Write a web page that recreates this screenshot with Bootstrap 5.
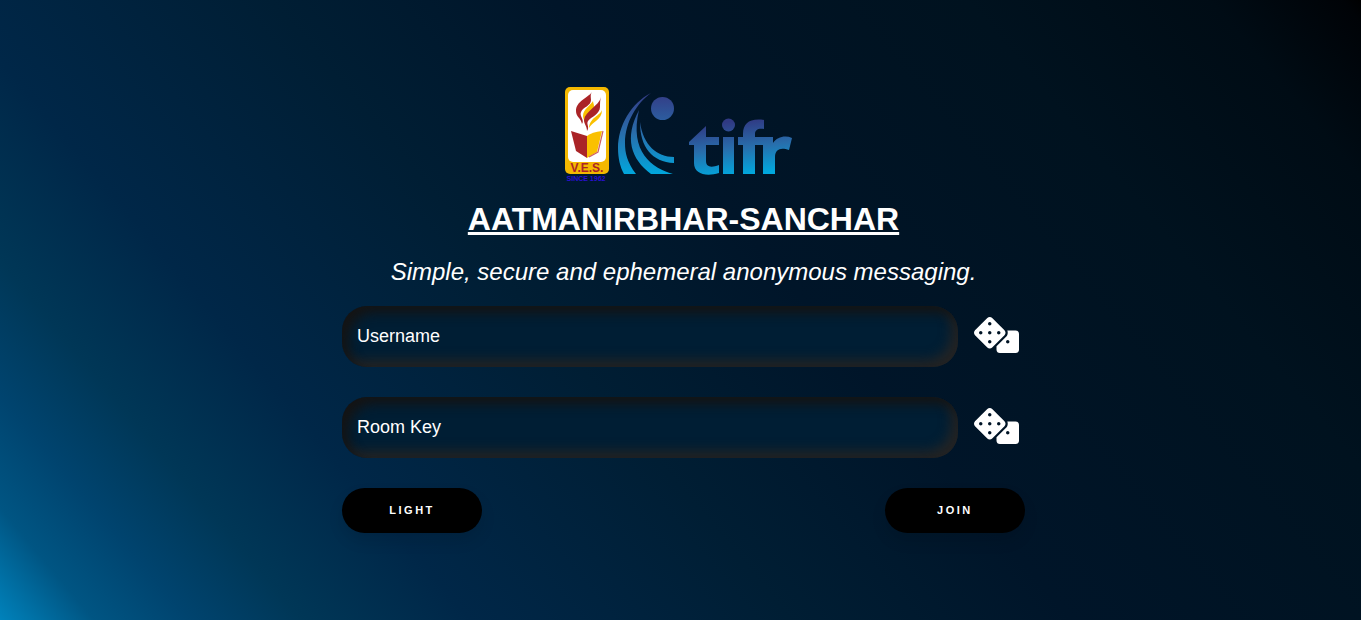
<!DOCTYPE html>
<html lang="en">
<head>
<meta charset="utf-8">
<meta name="viewport" content="width=device-width, initial-scale=1">
<title>Aatmanirbhar-Sanchar</title>
<link rel="stylesheet" href="https://cdn.jsdelivr.net/npm/bootstrap@5.3.0/dist/css/bootstrap.min.css">
<style>
body { font-family: "Liberation Sans", Arial, sans-serif; color: #fff; padding: 0 0 4px 6px; background: linear-gradient(50deg, #0082bb 0%, #005583 5%, #00446f 10%, #003757 16%, #002748 25%, #001e34 42%, #001529 57%, #00121f 79%, #000c15 92%, #000307 99%, #000001 100%); }
.join-panel { width: 50.4%; min-width: 320px; }
.logo-row { gap: 5px; padding-right: 11px; margin-bottom: 15px; }
.ves-logo { width: 46px; height: 100px; }
.tifr-logo { width: 178px; height: 100px; }
.site-title { font-size: 32px; line-height: 40px; font-weight: 700; margin-bottom: 19px; }
.tagline { font-size: 24px; line-height: 28px; font-style: italic; margin-bottom: 20px; }
.field-input { height: 61px; border: 0; border-radius: 25px; padding: 0 15px; font-size: 18px; color: #fff; background: #001e34; box-shadow: inset 7px 7px 12px #141414, inset -7px -7px 12px #242424; }
.field-input:focus { color: #fff; background: #001e34; box-shadow: inset 7px 7px 12px #141414, inset -7px -7px 12px #242424, 0 0 0 2px #0082bb; }
.field-input::placeholder { color: #fff; opacity: 1; }
.field-row { gap: 16px; padding-right: 6px; }
.dice-btn { width: 45px; height: 38px; border: 0; padding: 0; }
.pill-btn { width: 140px; height: 45px; border: 0; border-radius: 45px; background: #000; color: #fff; font-size: 11px; font-weight: 700; letter-spacing: 2.5px; box-shadow: 0 8px 15px rgba(0,0,0,.1); }
.pill-btn:hover { background: #0082bb; color: #fff; }
.field-gap { gap: 30px; }
</style>
</head>
<body class="min-vh-100 d-flex justify-content-center align-items-center">
<svg width="0" height="0" class="position-absolute" aria-hidden="true">
  <symbol id="dice" viewBox="0 0 640 512"><path fill="currentColor" d="M592 192H473.260c12.690 29.590 7.120 65.200-17 89.320L320 417.580V464c0 26.510 21.490 48 48 48h224c26.510 0 48-21.490 48-48V240c0-26.510-21.490-48-48-48zM480 376c-13.250 0-24-10.750-24-24 0-13.260 10.750-24 24-24s24 10.740 24 24c0 13.250-10.750 24-24 24zm-46.370-186.700L258.700 14.370c-19.160-19.160-50.230-19.160-69.390 0L14.370 189.300c-19.160 19.160-19.160 50.230 0 69.390L189.300 433.630c19.160 19.160 50.230 19.160 69.390 0L433.630 258.700c19.160-19.170 19.160-50.240 0-69.400zM96 248c-13.250 0-24-10.750-24-24 0-13.260 10.750-24 24-24s24 10.740 24 24c0 13.250-10.750 24-24 24zm128 128c-13.250 0-24-10.750-24-24 0-13.260 10.750-24 24-24s24 10.740 24 24c0 13.250-10.750 24-24 24zm0-128c-13.250 0-24-10.750-24-24 0-13.260 10.750-24 24-24s24 10.740 24 24c0 13.250-10.750 24-24 24zm0-128c-13.250 0-24-10.750-24-24 0-13.260 10.750-24 24-24s24 10.740 24 24c0 13.250-10.750 24-24 24zm128 128c-13.250 0-24-10.750-24-24 0-13.260 10.750-24 24-24s24 10.740 24 24c0 13.250-10.750 24-24 24z"/></symbol>
</svg>
<main class="join-panel">
  <header class="text-center">
    <div class="logo-row d-flex justify-content-center">
      <svg class="ves-logo" viewBox="0 1 46 100" role="img" aria-label="V.E.S. since 1962">
        <rect x="1" y="4" width="44" height="87" rx="5" fill="#f4b800"/>
        <rect x="4" y="7" width="38" height="72" rx="5" fill="#fff"/>
        <path fill="#aa2427" d="M28 9C24 15 12 18 12 28c0 6 5 7 6 13 3-4-3-8-1-12 2-5 10-6 10-12 0-3-1-5 1-8z"/>
        <path fill="#fac000" d="M29 18c-2 4-10 8-10 15 0 3 2 4 1 7 2-9 10-10 10-17 0-2-1-3-1-5z"/>
        <path fill="#aa2427" d="M37 14C35 23 21 28 20 37c0 4 3 6 3 11 3-4-1-7 1-10 3-4 12-7 12-14 0-4 0-7 1-10z"/>
        <path fill="#fac000" d="M38 27c-2 6-12 7-13 18 3-6 13-8 13-18z"/>
        <path fill="#aa2427" d="M7 48l16 5v22l-11-7z"/>
        <path fill="#fac000" d="M23 53q5-4 15-5l-5 21-10 6z"/>
        <path fill="none" stroke="#cf6062" stroke-width="1.200" d="M39 48l-5 21-9 5"/>
        <text x="23" y="89" text-anchor="middle" font-family="Liberation Sans" font-size="12" font-weight="700" fill="#aa2427">V.E.S.</text>
        <text x="22" y="98" text-anchor="middle" font-family="Liberation Sans" font-size="7" font-weight="700" fill="#2a10d0">SINCE 1962</text>
      </svg>
      <svg class="tifr-logo" viewBox="0 1 178 100" role="img" aria-label="tifr">
        <defs>
        <linearGradient id="markFade" gradientUnits="userSpaceOnUse" x1="0" y1="10" x2="0" y2="92"><stop offset="0" stop-color="#343b85"/><stop offset=".5" stop-color="#286eac"/><stop offset="1" stop-color="#00a8de"/></linearGradient>
        <linearGradient id="wordFade" gradientUnits="userSpaceOnUse" x1="120" y1="38" x2="126" y2="92"><stop offset="0" stop-color="#303983"/><stop offset=".5" stop-color="#286eac"/><stop offset="1" stop-color="#00a8de"/></linearGradient>
        </defs>
        <g fill="url(#markFade)">
          <circle cx="47.500" cy="25.500" r="11.500"/>
          <path d="M36 10C16 20 3 43 3 65c0 10 2 19 6 26h12C12 79 10 70 10 60 10 39 22 20 36 10z"/>
          <path d="M24 27C9 55 16 76 36 91h22C37 85 14 69 24 27z"/>
          <path d="M25 39c0 25 12 40 34 41v-6C42 74 28 62 25 39z"/>
        </g>
        <g fill="url(#wordFade)">
          <path d="M91 43v11h13v8H91v16c0 6 5 7 13 4v8c-13 4-25 1-25-10V62h-5v-3z"/>
          <circle cx="113.500" cy="42" r="6.500"/>
          <path d="M108 54h11v37h-11z"/>
          <path d="M128 91V62h-5v-8h5v-3c0-11 7-16 21-14v9c-6-1-9 1-9 5v3h9v8h-9v29z"/>
          <path d="M148 91V54h10v6c4-6 12-8 19-5l-3 12c-8-3-14-1-14 7v17z"/>
        </g>
      </svg>
    </div>
    <h1 class="site-title text-decoration-underline">AATMANIRBHAR-SANCHAR</h1>
    <p class="tagline">Simple, secure and ephemeral anonymous messaging.</p>
  </header>
  <form class="d-flex flex-column field-gap" onsubmit="return false">
    <div class="field-row d-flex align-items-center">
      <input class="form-control field-input" type="text" placeholder="Username" aria-label="Username">
      <button class="dice-btn btn text-white d-flex flex-shrink-0" type="button" aria-label="Random username"><svg width="45" height="36"><use href="#dice"/></svg></button>
    </div>
    <div class="field-row d-flex align-items-center">
      <input class="form-control field-input" type="text" placeholder="Room Key" aria-label="Room Key">
      <button class="dice-btn btn text-white d-flex flex-shrink-0" type="button" aria-label="Random room key"><svg width="45" height="36"><use href="#dice"/></svg></button>
    </div>
    <div class="d-flex justify-content-between">
      <button class="btn pill-btn" type="button">LIGHT</button>
      <button class="btn pill-btn" type="submit">JOIN</button>
    </div>
  </form>
</main>
<script src="https://cdn.jsdelivr.net/npm/bootstrap@5.3.0/dist/js/bootstrap.bundle.min.js"></script>
</body>
</html>
